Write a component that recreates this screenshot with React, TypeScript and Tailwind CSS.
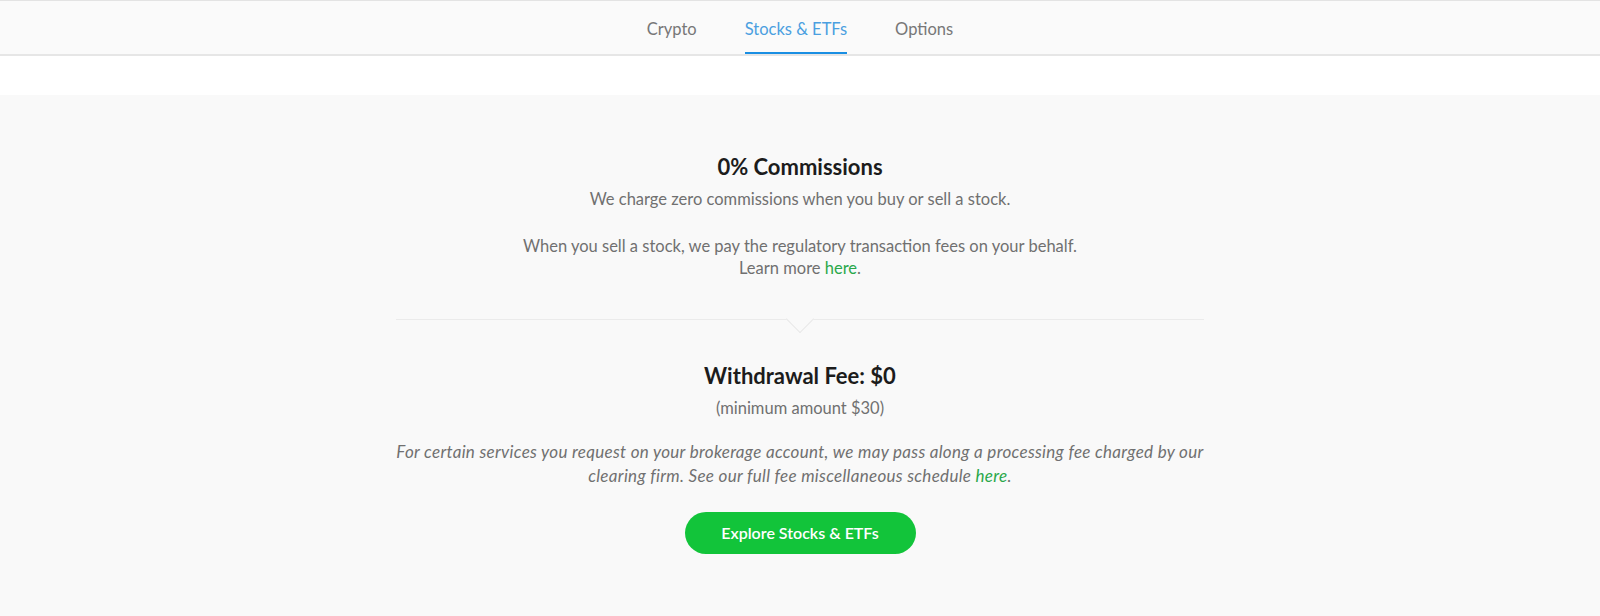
const tabs = ["Crypto", "Stocks & ETFs", "Options"]

function Tabs({ active }: { active: string }) {
  return (
    <nav className="flex h-[54px] items-stretch justify-center gap-12 border-t border-[#e3e3e3] bg-[#fafafa]">
      {tabs.map((t) => (
        <div
          key={t}
          className={
            t === active
              ? "flex items-center border-b-2 border-[#1a8fe3] pt-[6px] text-[16.5px] text-[#4b9fe0]"
              : "flex items-center border-b-2 border-transparent pt-[6px] text-[16.5px] text-[#777777]"
          }
        >
          {t}
        </div>
      ))}
    </nav>
  )
}

function Divider() {
  return (
    <div className="relative mt-[40px] h-px w-full bg-[#ebebeb]">
      {/* notch pointing down */}
      <div className="absolute left-1/2 top-[-10px] h-[20px] w-[20px] -translate-x-1/2 rotate-45 border-b border-r border-[#e8e8e8] bg-[#f9f9f9]" />
    </div>
  )
}

export default function App() {
  return (
    <div className="min-h-screen bg-white font-['Lato','Noto_Sans',sans-serif]">
      <Tabs active="Stocks & ETFs" />
      <div className="h-[2px] bg-[#e6e6e6]" />
      <div className="h-[39px] bg-white" />

      <section className="bg-[#f9f9f9] pb-16 pt-[58px]">
        <div className="mx-auto flex w-[808px] flex-col items-center text-center">
          <h2 className="text-[22px] font-bold leading-[28px] text-[#1c1c1c]">0% Commissions</h2>
          <p className="mt-[7px] text-[16.5px] leading-[22px] text-[#707070]">
            We charge zero commissions when you buy or sell a stock.
          </p>
          <p className="mt-[25px] text-[16.5px] leading-[22px] text-[#707070]">
            When you sell a stock, we pay the regulatory transaction fees on your behalf.
            <br />
            Learn more <span className="text-[#2aa84a]">here</span>.
          </p>

          <Divider />

          <h2 className="mt-[42px] text-[22px] font-bold leading-[28px] text-[#1c1c1c]">Withdrawal Fee: $0</h2>
          <p className="mt-[7px] text-[16.5px] leading-[22px] text-[#707070]">(minimum amount $30)</p>
          <p className="mt-[21px] text-[17px] italic leading-[24px] tracking-[0.3px] text-[#707070]">
            For certain services you request on your brokerage account, we may pass along a processing fee charged by our
            <br />
            clearing firm. See our full fee miscellaneous schedule <span className="text-[#2aa84a]">here</span>.
          </p>

          <button className="mt-[24px] h-[42px] w-[231px] rounded-full bg-[#12c43a] text-[16px] font-semibold text-white">
            Explore Stocks &amp; ETFs
          </button>
        </div>
      </section>
    </div>
  )
}
